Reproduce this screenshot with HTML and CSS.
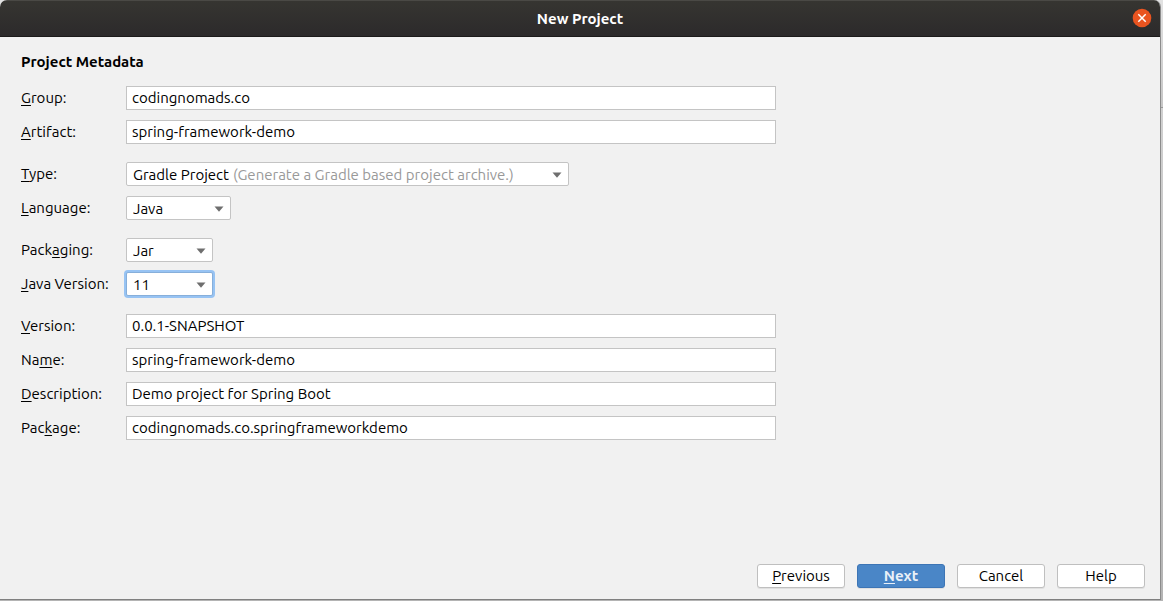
FILE: index.html
```html
<!DOCTYPE html>
<html lang="en">
<head>
<meta charset="utf-8">
<meta name="viewport" content="width=device-width, initial-scale=1">
<title>New Project</title>
<link rel="stylesheet" href="styles.css">
</head>
<body>
<main class="window">
  <header class="titlebar">
    <h1 class="title">New Project</h1>
    <button class="close" type="button" aria-label="Close">
      <svg viewBox="0 0 20 20" width="20" height="20" aria-hidden="true">
        <circle cx="10" cy="10" r="9.3" fill="#e95420"/>
        <path d="M6.3 6.3l7.4 7.4M13.7 6.3l-7.4 7.4" stroke="#fff" stroke-width="1.5"/>
      </svg>
    </button>
  </header>
  <form class="content">
    <h2 class="heading">Project Metadata</h2>
    <div class="fields">
      <div class="group">
        <div class="row"><label for="group"><u>G</u>roup:</label><input class="text" id="group" type="text" value="codingnomads.co"></div>
        <div class="row"><label for="artifact"><u>A</u>rtifact:</label><input class="text" id="artifact" type="text" value="spring-framework-demo"></div>
      </div>
      <div class="group">
        <div class="row"><label for="type"><u>T</u>ype:</label>
          <div class="combo combo-wide">
            <select id="type"><option>Gradle Project</option><option>Maven Project</option></select>
            <span class="hint">(Generate a Gradle based project archive.)</span>
            <svg class="arrow" viewBox="0 0 10 6" aria-hidden="true"><path d="M.5 .5h9L5 5.7z"/></svg>
          </div>
        </div>
        <div class="row"><label for="language"><u>L</u>anguage:</label>
          <div class="combo combo-medium">
            <select id="language"><option>Java</option><option>Kotlin</option><option>Groovy</option></select>
            <svg class="arrow" viewBox="0 0 10 6" aria-hidden="true"><path d="M.5 .5h9L5 5.7z"/></svg>
          </div>
        </div>
      </div>
      <div class="group">
        <div class="row"><label for="packaging">Pack<u>a</u>ging:</label>
          <div class="combo">
            <select id="packaging"><option>Jar</option><option>War</option></select>
            <svg class="arrow" viewBox="0 0 10 6" aria-hidden="true"><path d="M.5 .5h9L5 5.7z"/></svg>
          </div>
        </div>
        <div class="row"><label for="java"><u>J</u>ava Version:</label>
          <div class="combo combo-active">
            <select id="java"><option>11</option><option>8</option></select>
            <svg class="arrow" viewBox="0 0 10 6" aria-hidden="true"><path d="M.5 .5h9L5 5.7z"/></svg>
          </div>
        </div>
      </div>
      <div class="group">
        <div class="row"><label for="version"><u>V</u>ersion:</label><input class="text" id="version" type="text" value="0.0.1-SNAPSHOT"></div>
        <div class="row"><label for="name">Na<u>m</u>e:</label><input class="text" id="name" type="text" value="spring-framework-demo"></div>
        <div class="row"><label for="description"><u>D</u>escription:</label><input class="text" id="description" type="text" value="Demo project for Spring Boot"></div>
        <div class="row"><label for="package">Pac<u>k</u>age:</label><input class="text" id="package" type="text" value="codingnomads.co.springframeworkdemo"></div>
      </div>
    </div>
    <footer class="actions">
      <button class="btn" type="button"><u>P</u>revious</button>
      <button class="btn btn-primary" type="button"><u>N</u>ext</button>
      <button class="btn" type="button">Cancel</button>
      <button class="btn" type="button">Help</button>
    </footer>
  </form>
</main>
</body>
</html>
```
FILE: styles.css
```css
* {
  box-sizing: border-box;
}

body {
  margin: 0;
  padding: 0 2px 1px 0;
  min-height: 100vh;
  display: flex;
  background: linear-gradient(#e2e2e2, #c6c6c6 107px, #999 107px, #999 108px, #d0d0d0 108px, #b4b4b4);
  font: 15px/20px Ubuntu, "Noto Sans", sans-serif;
  color: #000;
}

.window {
  flex: 1;
  display: flex;
  flex-direction: column;
  border-right: 1px solid #8c8c8c;
  border-bottom: 1px solid #808080;
  border-radius: 7px 7px 0 0;
  background: #f1f1f1;
  overflow: hidden;
}

.titlebar {
  display: grid;
  grid-template-columns: 1fr auto 1fr;
  align-items: center;
  height: 37px;
  padding: 0 8px 1px;
  border-top: 1px solid #4a4945;
  border-bottom: 1px solid #1c1b1b;
  background: linear-gradient(#363531, #2c2a2b);
  color: #fff;
}

.title {
  grid-column: 2;
  margin: 0;
  padding-top: 2px;
  font-size: 15px;
  line-height: 20px;
}

.close {
  justify-self: end;
  padding: 0;
  border: 0;
  background: none;
}

.close svg {
  display: block;
}

.content {
  flex: 1;
  display: flex;
  flex-direction: column;
  padding: 15px 15px 11px 21px;
}

.heading {
  margin: 0 0 14px;
  font-size: 15px;
  line-height: 20px;
}

.fields {
  display: flex;
  flex-direction: column;
  gap: 18px;
  width: 60%;
  min-width: 755px;
}

.group {
  display: flex;
  flex-direction: column;
  gap: 10px;
}

.row {
  display: grid;
  grid-template-columns: 105px 1fr;
  align-items: center;
}

u {
  text-underline-offset: 2px;
  text-decoration-thickness: 1px;
  text-decoration-skip-ink: none;
}

.text {
  width: 100%;
  height: 24px;
  padding: 0 5px 1px;
  border: 1px solid #c4c4c4;
  background: #fff;
  font: inherit;
  color: inherit;
}

.combo {
  display: flex;
  align-items: center;
  width: 87px;
  height: 24px;
  padding: 1px 6px 0;
  border: 1px solid #c4c4c4;
  border-radius: 2px;
  background: #fff;
}

.combo-medium {
  width: 105px;
}

.combo-wide {
  width: 443px;
}

.combo-active {
  border-color: #87afda;
  box-shadow: 0 0 0 2px #97c3f3;
}

.combo select {
  appearance: none;
  field-sizing: content;
  padding: 0;
  border: 0;
  outline: 0;
  background: none;
  font: inherit;
  color: inherit;
}

.hint {
  margin-left: 4px;
  color: #999;
  white-space: nowrap;
}

.arrow {
  width: 10px;
  height: 6px;
  margin-left: auto;
  fill: #6e6e6e;
}

.actions {
  display: flex;
  justify-content: flex-end;
  gap: 12px;
  margin-top: auto;
}

.btn {
  width: 88px;
  height: 24px;
  padding: 0;
  border: 1px solid #bfbfbf;
  border-radius: 3px;
  background: #fff;
  box-shadow: 0 1px 0 #e0e0e0;
  font: inherit;
  color: inherit;
}

.btn-primary {
  border-color: #3d75b5;
  background: #4a86c7;
  color: #e9f0f8;
  font-weight: bold;
}
```
